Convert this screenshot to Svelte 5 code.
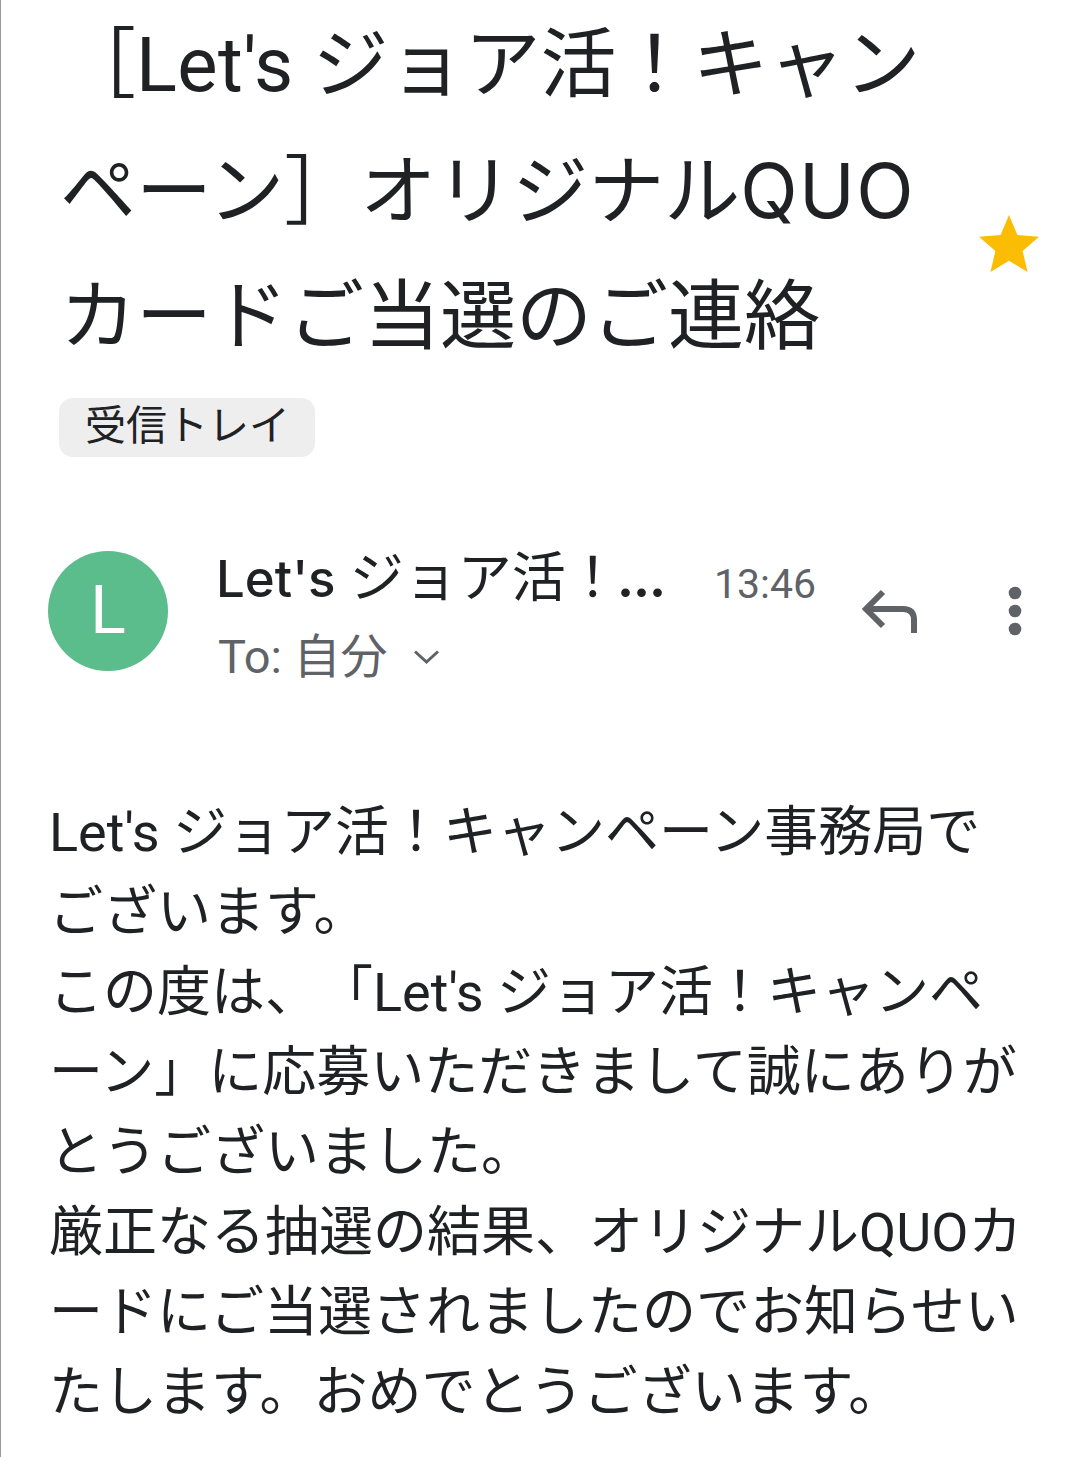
<script lang="ts">
  const bodyLines = [
    "Let's ジョア活！キャンペーン事務局で",
    'ございます。',
    "この度は、「Let's ジョア活！キャンペ",
    'ーン」に応募いただきまして誠にありが',
    'とうございました。',
    '厳正なる抽選の結果、オリジナルQUOカ',
    'ードにご当選されましたのでお知らせい',
    'たします。おめでとうございます。'
  ];
</script>

<div class="mail">
  <header class="subject">
    <div class="subject-main">
      <h1 class="title">
        <div>［<span class="lets">Let's</span> ジョア活！キャン</div>
        <div>ペーン］オリジナル<span class="quo">QUO</span></div>
        <div>カードご当選のご連絡</div>
      </h1>
      <span class="label">受信トレイ</span>
    </div>
    <svg class="star" width="72" height="72" viewBox="0 0 24 24" fill="#fbbc04">
      <path d="M12 17.27 18.18 21l-1.64-7.03L22 9.24l-7.19-.61L12 2 9.19 8.63 2 9.24l5.46 4.73L5.82 21z" />
    </svg>
  </header>

  <section class="sender">
    <div class="avatar">L</div>
    <div class="sender-info">
      <div class="sender-top">
        <span class="sender-name"><span class="name-latin">Let's</span> ジョア活！<span class="name-latin dots">...</span></span>
        <span class="time">13:46</span>
      </div>
      <div class="to">
        To: 自分
        <svg width="30" height="30" viewBox="0 0 30 30" fill="none" stroke="#5f6368" stroke-width="3">
          <path d="M3 9.5 L14.5 20 L26 9.5" />
        </svg>
      </div>
    </div>
    <svg class="reply" width="56" height="46" viewBox="0 0 56 46" fill="none" stroke="#5f6368" stroke-width="6">
      <path d="M21 3 L4 20 L21 37" />
      <path d="M4 20 H41 Q52 20 52 31 V44" />
    </svg>
    <svg class="more" width="14" height="50" viewBox="0 0 14 50" fill="#5f6368">
      <circle cx="7" cy="7" r="6.3" />
      <circle cx="7" cy="25" r="6.3" />
      <circle cx="7" cy="43" r="6.3" />
    </svg>
  </section>

  <section class="body">
    {#each bodyLines as line}
      <div>{line}</div>
    {/each}
  </section>
</div>

<style>
  :global(body) {
    background: #fff;
  }

  .mail {
    width: 1080px;
    height: 1457px;
    box-sizing: border-box;
    overflow: hidden;
    border-left: 1px solid #9a9a9a;
    font-family: Roboto, "Noto Sans CJK JP", sans-serif;
    color: #202124;
    text-spacing-trim: space-all;
  }

  .subject {
    display: flex;
    align-items: flex-start;
    justify-content: space-between;
    padding: 3px 35px 0 58px;
  }

  .title {
    margin: 0;
    padding-left: 1px;
    font-size: 76px;
    font-weight: 400;
    line-height: 125px;
    white-space: nowrap;
  }

  .lets {
    letter-spacing: 0.4px;
  }

  .quo {
    font-family: Inter, sans-serif;
    font-size: 75px;
    letter-spacing: 1.5px;
  }

  .label {
    display: inline-block;
    margin-top: 18px;
    padding: 0 25px 0 26px;
    height: 59px;
    line-height: 56px;
    background: #eeeeee;
    border-radius: 14px;
    font-size: 41px;
  }

  .star {
    margin-top: 206px;
  }

  .sender {
    display: flex;
    align-items: flex-start;
    margin-top: 87px;
    padding-left: 47px;
  }

  .avatar {
    width: 120px;
    height: 120px;
    margin-top: 7px;
    border-radius: 50%;
    background: #5bbc8c;
    color: #fff;
    font-size: 66px;
    line-height: 120px;
    text-align: center;
    flex-shrink: 0;
  }

  .sender-info {
    width: 600px;
    margin-left: 48px;
  }

  .sender-top {
    display: flex;
    align-items: center;
    justify-content: space-between;
    height: 70px;
    line-height: 70px;
  }

  .sender-name {
    font-size: 54px;
    word-spacing: 1px;
    white-space: nowrap;
  }

  .name-latin {
    font-family: Inter, sans-serif;
    font-size: 51px;
    font-weight: 500;
  }

  .dots {
    margin-left: -3px;
    letter-spacing: -1px;
    font-weight: 700;
  }

  .time {
    padding-top: 10px;
    font-size: 41px;
    color: #5f6368;
  }

  .to {
    display: flex;
    align-items: center;
    gap: 24px;
    margin-top: 4px;
    padding-left: 2px;
    font-size: 47px;
    line-height: 78px;
    color: #5f6368;
  }

  .reply {
    margin-left: 46px;
    margin-top: 45px;
  }

  .more {
    margin-left: 90px;
    margin-top: 42px;
  }

  .body {
    margin-top: 97px;
    padding-left: 48px;
    font-size: 54px;
    line-height: 80px;
    white-space: nowrap;
  }
</style>
